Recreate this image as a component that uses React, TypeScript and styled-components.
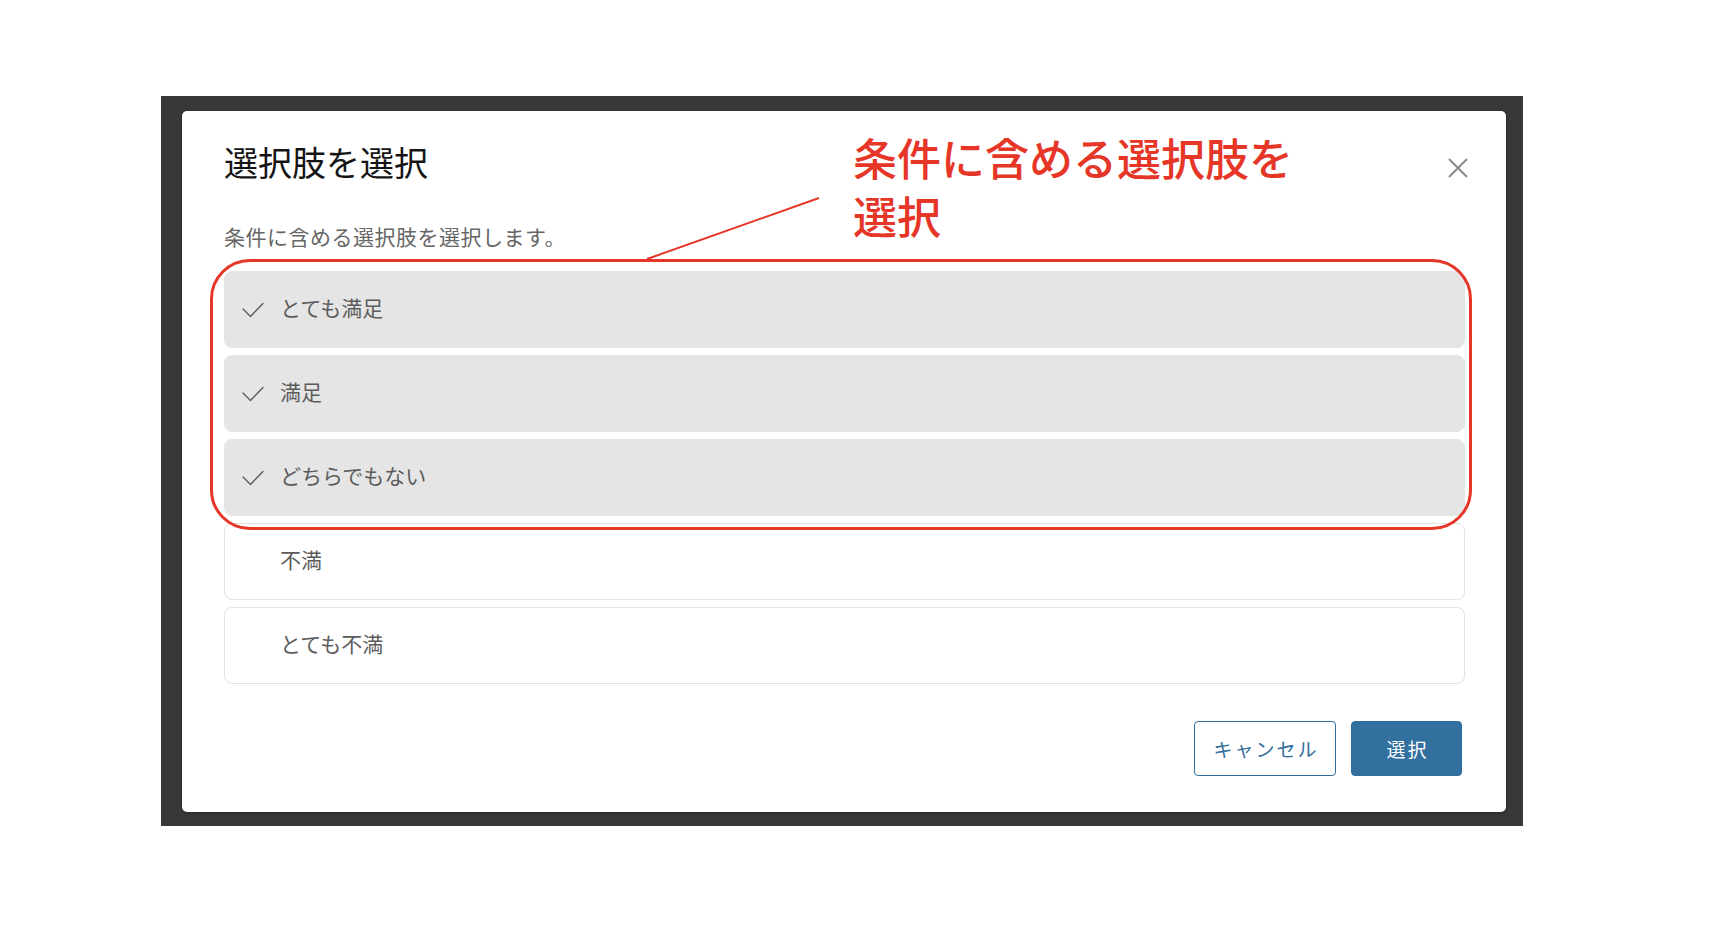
import React from "react";
import styled, { createGlobalStyle } from "styled-components";

const GlobalStyle = createGlobalStyle`
  html, body {
    margin: 0;
    padding: 0;
    background: #ffffff;
  }
  body {
    font-family: "Noto Sans CJK JP", "Noto Sans", sans-serif;
  }
  * { box-sizing: border-box; }
`;

const Page = styled.div`
  position: relative;
  width: 1710px;
  height: 944px;
  padding: 96px 0 0 161px;
  background: #ffffff;
`;

const Frame = styled.div`
  width: 1362px;
  height: 730px;
  background: #383838;
  padding: 15px 17px 14px 21px;
`;

const Dialog = styled.div`
  height: 701px;
  background: #ffffff;
  border-radius: 5px;
  box-shadow: 0 1px 3px rgba(0, 0, 0, 0.45);
  padding: 27px 41px 0 42px;
  display: flex;
  flex-direction: column;
`;

const Header = styled.div`
  display: flex;
  justify-content: space-between;
  align-items: flex-start;
`;

const Title = styled.h2`
  margin: 0;
  font-size: 34px;
  line-height: 48px;
  font-weight: 400;
  color: #141414;
`;

const CloseButton = styled.button`
  margin: 20px -3px 0 0;
  width: 20px;
  height: 20px;
  padding: 0;
  border: none;
  background: none;
  display: flex;
  align-items: center;
  justify-content: center;
  cursor: pointer;
`;

const Description = styled.p`
  margin: 35px 0 0;
  font-size: 21px;
  line-height: 30px;
  letter-spacing: 0.5px;
  color: #666666;
`;

const OptionList = styled.div`
  margin-top: 20px;
  display: flex;
  flex-direction: column;
  gap: 7px;
`;

const Option = styled.div<{ $selected: boolean }>`
  height: 77px;
  border-radius: 8px;
  border: 1px solid ${(p) => (p.$selected ? "#e5e5e5" : "#e2e2e2")};
  background: ${(p) => (p.$selected ? "#e5e5e5" : "#ffffff")};
  display: flex;
  align-items: center;
  padding-left: 17px;
  gap: 16px;
`;

const CheckSlot = styled.span`
  width: 22px;
  height: 16px;
  display: flex;
  align-items: center;
  justify-content: center;
`;

const OptionLabel = styled.span`
  font-size: 21px;
  line-height: 30px;
  margin-bottom: 6px;
  color: #5c5c5c;
`;

const Footer = styled.div`
  margin-top: 37px;
  margin-right: 3px;
  display: flex;
  justify-content: flex-end;
  gap: 15px;
`;

const Button = styled.button<{ $primary?: boolean; $width: number }>`
  width: ${(p) => p.$width}px;
  height: 55px;
  border-radius: 4px;
  font-family: "Noto Sans CJK JP", "Noto Sans", sans-serif;
  font-size: 19px;
  letter-spacing: 2px;
  padding: 0 0 0 2px;
  cursor: pointer;
  border: 1px solid #2f6d9c;
  background: ${(p) => (p.$primary ? "#31709f" : "#ffffff")};
  color: ${(p) => (p.$primary ? "#ffffff" : "#2f6d9c")};
`;

const Highlight = styled.div`
  position: absolute;
  left: 210px;
  top: 259px;
  width: 1262px;
  height: 271px;
  border: 3px solid #e63628;
  border-radius: 40px;
  pointer-events: none;
`;

const Callout = styled.div`
  position: absolute;
  left: 853px;
  top: 128px;
  font-size: 44px;
  line-height: 58px;
  font-weight: 500;
  color: #e63628;
  white-space: nowrap;
`;

const Leader = styled.svg`
  position: absolute;
  left: 640px;
  top: 190px;
  overflow: visible;
  pointer-events: none;
`;

const options = [
  { label: "とても満足", selected: true },
  { label: "満足", selected: true },
  { label: "どちらでもない", selected: true },
  { label: "不満", selected: false },
  { label: "とても不満", selected: false },
];

const CheckIcon = () => (
  <svg width="22" height="16" viewBox="0 0 22 16" fill="none">
    <polyline
      points="1,7 8.5,14.5 21,1.5"
      stroke="#5a5a5a"
      strokeWidth="1.4"
      strokeLinecap="round"
      strokeLinejoin="round"
    />
  </svg>
);

const CloseIcon = () => (
  <svg width="20" height="20" viewBox="0 0 20 20" fill="none">
    <path d="M1 1 L19 19 M19 1 L1 19" stroke="#8a8a8a" strokeWidth="2" />
  </svg>
);

export default function App() {
  return (
    <>
      <GlobalStyle />
      <Page>
        <Frame>
          <Dialog>
            <Header>
              <Title>選択肢を選択</Title>
              <CloseButton aria-label="閉じる">
                <CloseIcon />
              </CloseButton>
            </Header>
            <Description>条件に含める選択肢を選択します。</Description>
            <OptionList>
              {options.map((o) => (
                <Option key={o.label} $selected={o.selected}>
                  <CheckSlot>{o.selected && <CheckIcon />}</CheckSlot>
                  <OptionLabel>{o.label}</OptionLabel>
                </Option>
              ))}
            </OptionList>
            <Footer>
              <Button $width={142}>キャンセル</Button>
              <Button $primary $width={111}>選択</Button>
            </Footer>
          </Dialog>
        </Frame>
        <Highlight />
        <Leader width="190" height="80" viewBox="0 0 190 80">
          <line x1="7" y1="69" x2="179" y2="8" stroke="#e63628" strokeWidth="2" />
        </Leader>
        <Callout>
          条件に含める選択肢を
          <br />
          選択
        </Callout>
      </Page>
    </>
  );
}
